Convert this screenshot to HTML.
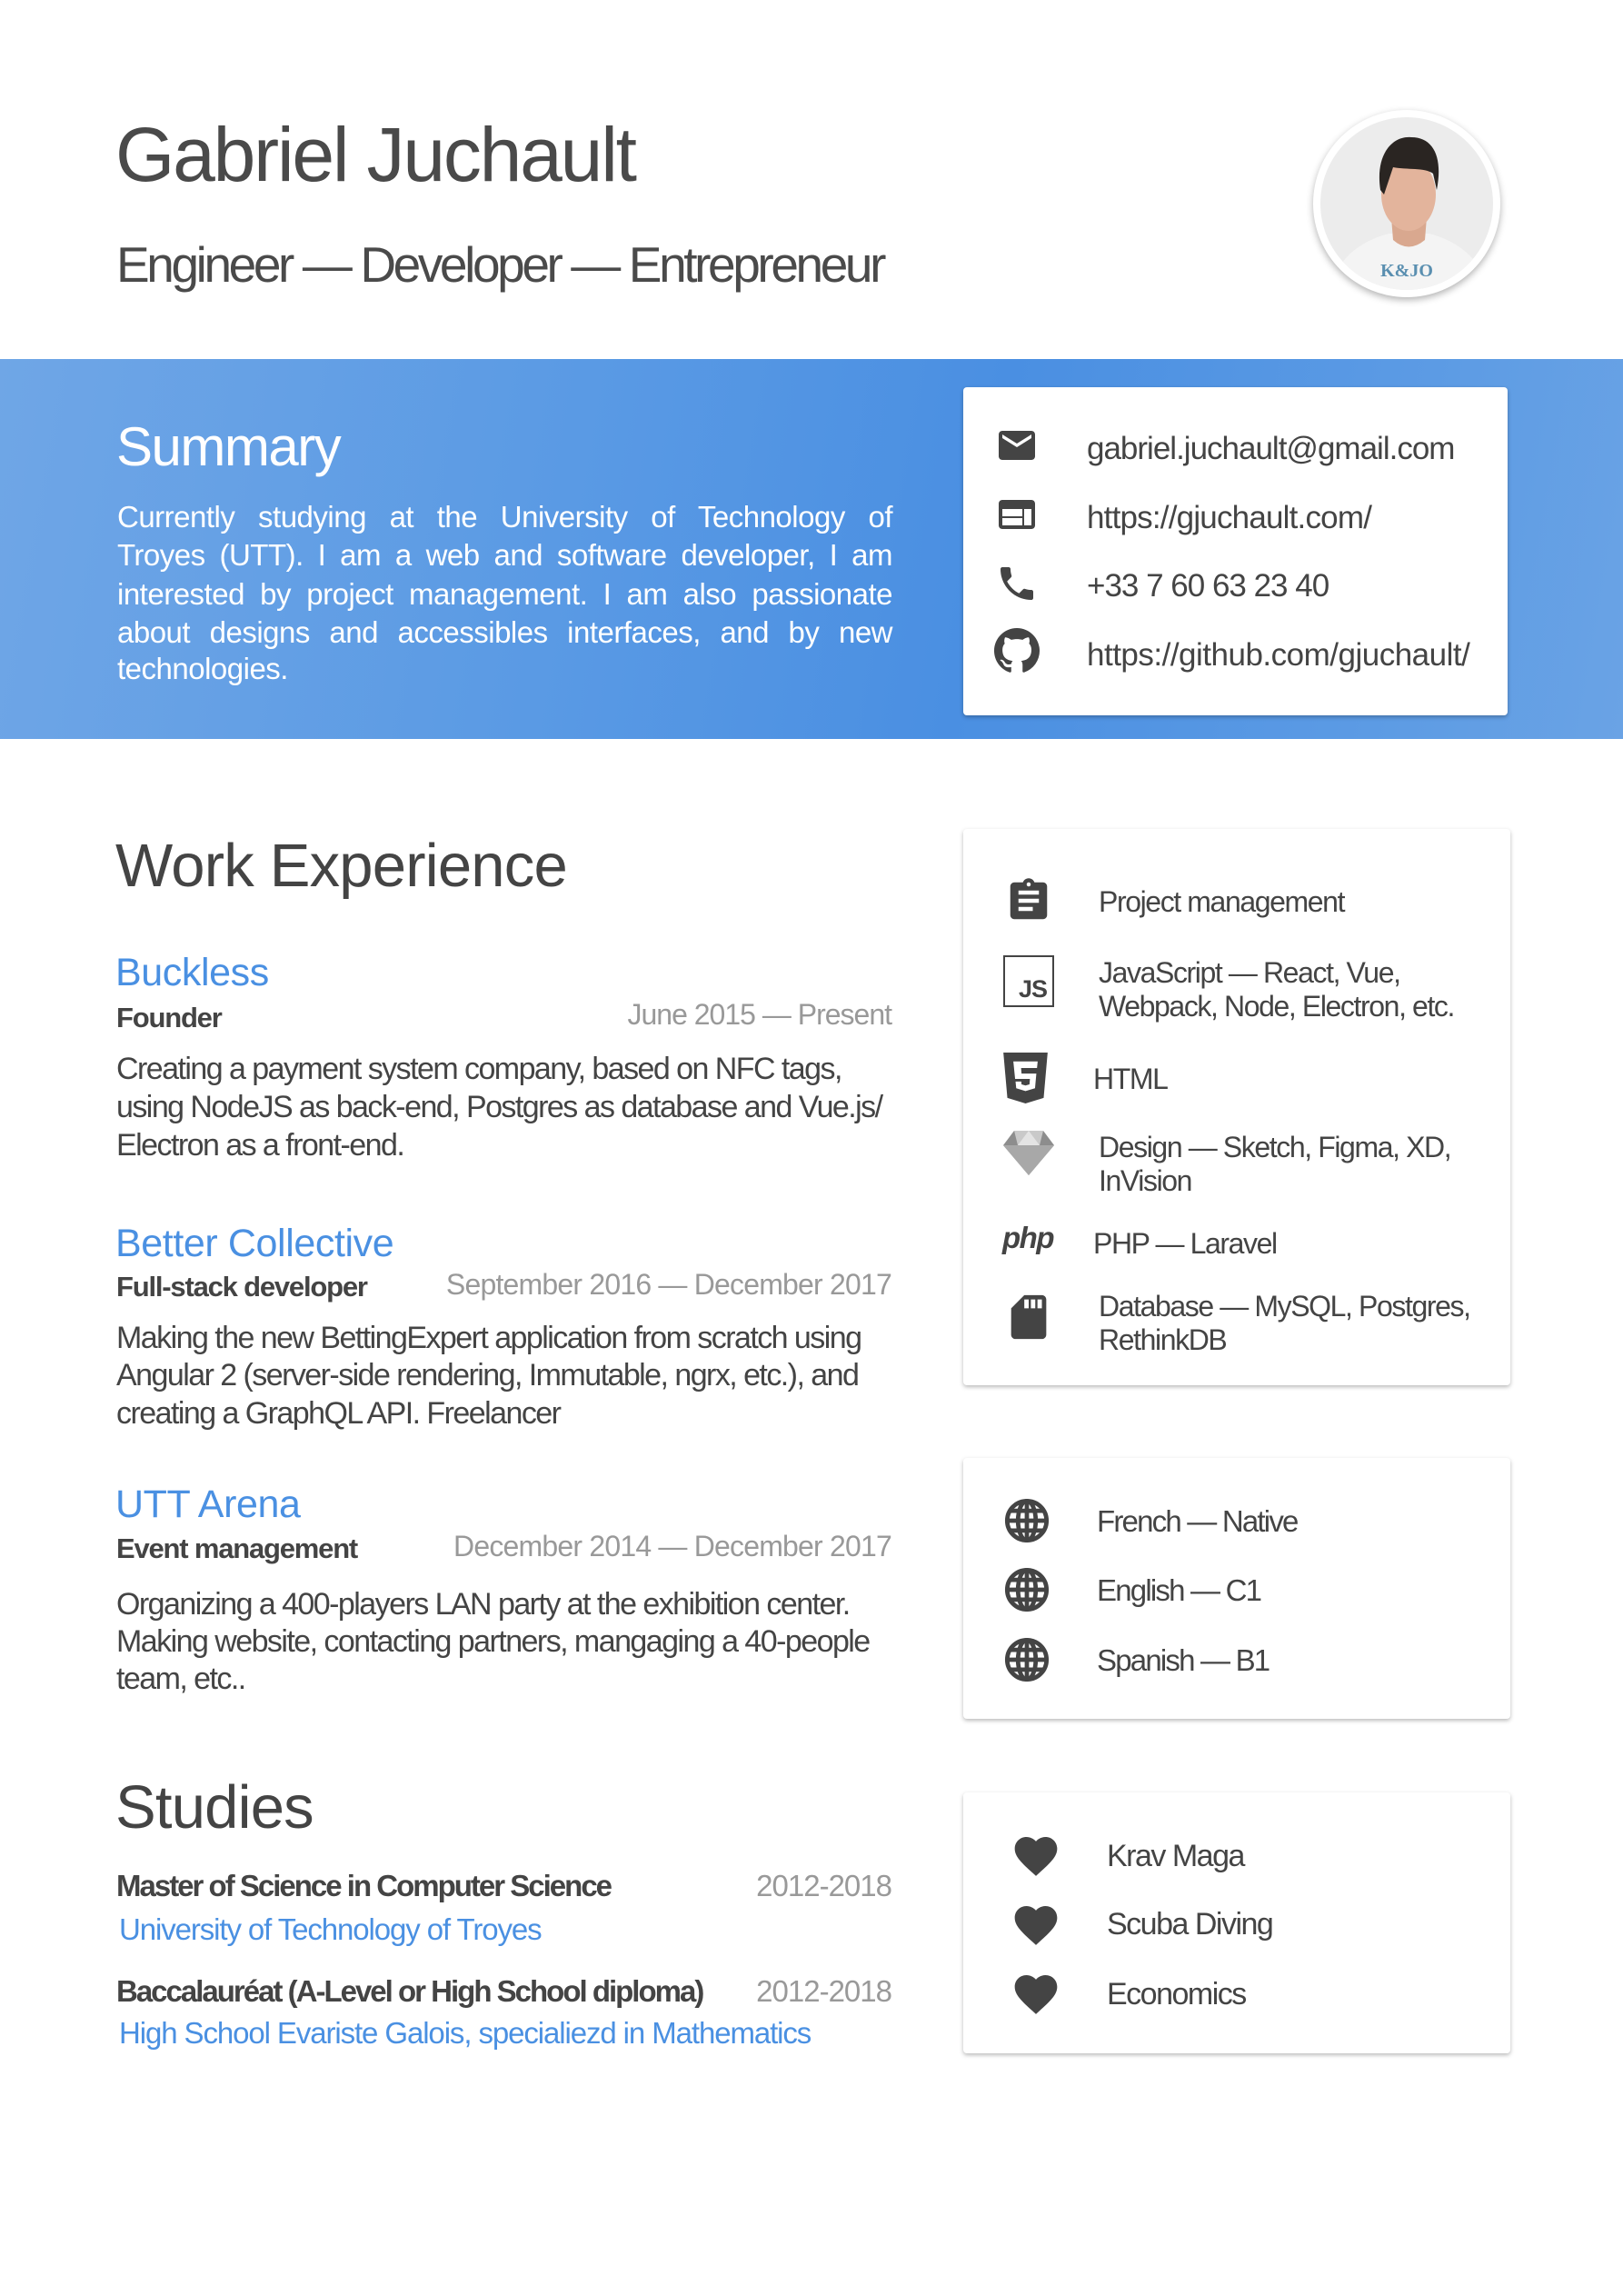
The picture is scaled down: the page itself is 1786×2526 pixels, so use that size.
<!DOCTYPE html>
<html><head><meta charset="utf-8">
<style>
*{margin:0;padding:0;box-sizing:border-box}
html,body{width:1786px;height:2526px;background:#fff;overflow:hidden}
body{position:relative;font-family:"Liberation Sans",Arial,sans-serif;color:#444}
.a{position:absolute;white-space:nowrap;line-height:1}
.band{position:absolute;left:0;top:395px;width:1786px;height:418px;background:linear-gradient(100deg,#6fa6e6 0%,#5a9ae4 35%,#4a8fe2 60%,#5c9be4 85%,#6aa3e5 100%)}
.card{position:absolute;background:#fff;border-radius:4px;box-shadow:0 2px 5px rgba(0,0,0,.28)}
.blue{color:#4a90e2}
.gray{color:#999}
.desc{font-size:34px;letter-spacing:-1.55px;color:#444}
.sum{position:absolute;left:129px;width:853px;font-size:33px;letter-spacing:-0.5px;color:#fff;text-align:justify;text-align-last:justify;white-space:nowrap;line-height:1}
.ic{position:absolute}
.sk{font-size:32px;color:#444;letter-spacing:-1.4px}
.role{font-size:31px;font-weight:bold;letter-spacing:-1.2px}
.co{font-size:43px;letter-spacing:-0.4px}
</style></head><body>

<div class="a" style="left:127px;top:128px;font-size:84px;letter-spacing:-2.2px;color:#4a4a4a">Gabriel Juchault</div>
<div class="a" style="left:128px;top:264px;font-size:55px;letter-spacing:-3.4px;color:#4a4a4a">Engineer — Developer — Entrepreneur</div>

<!-- photo -->
<div style="position:absolute;left:1445px;top:121px;width:206px;height:206px;border-radius:50%;background:#fff;box-shadow:0 3px 8px rgba(0,0,0,.3)"></div>
<svg style="position:absolute;left:1453px;top:129px" width="190" height="190" viewBox="0 0 190 190">
<defs><clipPath id="cp"><circle cx="95" cy="95" r="95"/></clipPath></defs>
<g clip-path="url(#cp)">
<rect width="190" height="190" fill="#ececec"/>
<path d="M10 190 C20 150 50 135 75 128 L120 128 C145 135 175 150 185 190Z" fill="#f4f4f4"/>
<path d="M78 110 L80 135 Q97 150 115 135 L117 110Z" fill="#d9a88f"/>
<ellipse cx="97" cy="85" rx="30" ry="40" fill="#e3b49c"/>
<path d="M66 80 C60 40 80 20 100 22 C125 22 135 45 128 80 L124 62 C115 55 95 58 80 55 L70 85Z" fill="#2a2522"/>
<text x="95" y="175" font-family="Liberation Serif,serif" font-weight="bold" font-size="20" fill="#5a8fb0" text-anchor="middle">K&amp;JO</text>
</g></svg>

<div class="band"></div>
<div class="a" style="left:128px;top:462px;font-size:60px;letter-spacing:-1.5px;color:#fff">Summary</div>
<div class="sum" style="top:552px">Currently studying at the University of Technology of</div>
<div class="sum" style="top:594px">Troyes (UTT). I am a web and software developer, I am</div>
<div class="sum" style="top:637px">interested by project management. I am also passionate</div>
<div class="sum" style="top:679px">about designs and accessibles interfaces, and by new</div>
<div class="sum" style="top:719px;text-align-last:left">technologies.</div>

<div class="card" style="left:1060px;top:426px;width:599px;height:361px"></div>
<svg class="ic" style="left:1095px;top:466px" width="48" height="48" viewBox="0 0 24 24"><path fill="#444" d="M20 4H4c-1.1 0-1.99.9-1.99 2L2 18c0 1.1.9 2 2 2h16c1.1 0 2-.9 2-2V6c0-1.1-.9-2-2-2zm0 4l-8 5-8-5V6l8 5 8-5v2z"/></svg>
<svg class="ic" style="left:1095px;top:542px" width="48" height="48" viewBox="0 0 24 24"><path fill="#444" d="M20 4H4c-1.1 0-1.99.9-1.99 2L2 18c0 1.1.9 2 2 2h16c1.1 0 2-.9 2-2V6c0-1.1-.9-2-2-2zm-5 14H4v-4h11v4zm0-5H4V9h11v4zm5 5h-4V9h4v9z"/></svg>
<svg class="ic" style="left:1095px;top:618px" width="48" height="48" viewBox="0 0 24 24"><path fill="#444" d="M6.62 10.79c1.44 2.83 3.76 5.14 6.59 6.59l2.2-2.2c.27-.27.67-.36 1.020-.24 1.12.37 2.33.57 3.57.57.55 0 1 .45 1 1V20c0 .55-.45 1-1 1-9.39 0-17-7.61-17-17 0-.55.45-1 1-1h3.5c.55 0 1 .45 1 1 0 1.25.2 2.45.57 3.57.11.35.03.74-.25 1.02l-2.2 2.2z"/></svg>
<svg class="ic" style="left:1094px;top:691px" width="50" height="50" viewBox="0 0 16 16"><path fill="#444" d="M8 0C3.58 0 0 3.58 0 8c0 3.54 2.29 6.53 5.47 7.59.4.07.55-.17.55-.38 0-.19-.01-.82-.01-1.49-2.01.37-2.53-.49-2.69-.94-.09-.23-.48-.94-.82-1.13-.28-.15-.68-.52-.01-.53.63-.01 1.08.58 1.23.82.72 1.21 1.87.87 2.33.66.07-.52.28-.87.51-1.07-1.78-.2-3.64-.89-3.64-3.95 0-.87.31-1.59.82-2.15-.08-.2-.36-1.02.08-2.12 0 0 .67-.21 2.2.82.64-.18 1.32-.27 2-.27.68 0 1.36.09 2 .27 1.53-1.04 2.2-.82 2.2-.82.44 1.1.16 1.92.08 2.12.51.56.82 1.27.82 2.15 0 3.07-1.87 3.75-3.65 3.95.29.25.54.73.54 1.48 0 1.07-.01 1.93-.01 2.2 0 .21.15.46.55.38A8.013 8.013 0 0016 8c0-4.42-3.58-8-8-8z"/></svg>
<div class="a" style="left:1196px;top:476px;font-size:35px;letter-spacing:-1px">gabriel.juchault@gmail.com</div>
<div class="a" style="left:1196px;top:552px;font-size:35px;letter-spacing:-0.8px">https://gjuchault.com/</div>
<div class="a" style="left:1196px;top:627px;font-size:35px;letter-spacing:-1px">+33 7 60 63 23 40</div>
<div class="a" style="left:1196px;top:703px;font-size:35px;letter-spacing:-0.5px">https://github.com/gjuchault/</div>

<!-- Work -->
<div class="a" style="left:127px;top:919px;font-size:67px;letter-spacing:-0.8px;color:#444">Work Experience</div>

<div class="a blue co" style="left:127px;top:1049px">Buckless</div>
<div class="a role" style="left:128px;top:1104px">Founder</div>
<div class="a gray" style="right:805px;top:1100px;font-size:32px;letter-spacing:-1px">June 2015 — Present</div>
<div class="a desc" style="left:128px;top:1159px">Creating a payment system company, based on NFC tags,</div>
<div class="a desc" style="left:128px;top:1201px">using NodeJS as back-end, Postgres as database and Vue.js/</div>
<div class="a desc" style="left:128px;top:1243px">Electron as a front-end.</div>

<div class="a blue co" style="left:127px;top:1347px">Better Collective</div>
<div class="a role" style="left:128px;top:1400px">Full-stack developer</div>
<div class="a gray" style="right:805px;top:1397px;font-size:32px;letter-spacing:-0.8px">September 2016 — December 2017</div>
<div class="a desc" style="left:128px;top:1455px">Making the new BettingExpert application from scratch using</div>
<div class="a desc" style="left:128px;top:1496px">Angular 2 (server-side rendering, Immutable, ngrx, etc.), and</div>
<div class="a desc" style="left:128px;top:1538px">creating a GraphQL API. Freelancer</div>

<div class="a blue co" style="left:127px;top:1634px">UTT Arena</div>
<div class="a role" style="left:128px;top:1688px">Event management</div>
<div class="a gray" style="right:805px;top:1685px;font-size:32px;letter-spacing:-0.8px">December 2014 — December 2017</div>
<div class="a desc" style="left:128px;top:1748px">Organizing a 400-players LAN party at the exhibition center.</div>
<div class="a desc" style="left:128px;top:1789px">Making website, contacting partners, mangaging a 40-people</div>
<div class="a desc" style="left:128px;top:1830px">team, etc..</div>

<div class="a" style="left:127px;top:1955px;font-size:67px;letter-spacing:-0.8px">Studies</div>
<div class="a" style="left:128px;top:2058px;font-size:33px;font-weight:bold;letter-spacing:-2px">Master of Science in Computer Science</div>
<div class="a gray" style="right:805px;top:2058px;font-size:33px;letter-spacing:-1px">2012-2018</div>
<div class="a blue" style="left:131px;top:2106px;font-size:33px;letter-spacing:-1.1px">University of Technology of Troyes</div>
<div class="a" style="left:128px;top:2174px;font-size:33px;font-weight:bold;letter-spacing:-2px">Baccalauréat (A-Level or High School diploma)</div>
<div class="a gray" style="right:805px;top:2174px;font-size:33px;letter-spacing:-1px">2012-2018</div>
<div class="a blue" style="left:131px;top:2220px;font-size:33px;letter-spacing:-1.1px">High School Evariste Galois, specialiezd in Mathematics</div>

<!-- Skills card -->
<div class="card" style="left:1060px;top:912px;width:602px;height:612px"></div>
<svg class="ic" style="left:1105px;top:964px" width="54" height="54" viewBox="0 0 24 24"><path fill="#444" d="M19 3h-4.18C14.4 1.84 13.3 1 12 1c-1.3 0-2.4.84-2.82 2H5c-1.1 0-2 .9-2 2v14c0 1.1.9 2 2 2h14c1.1 0 2-.9 2-2V5c0-1.1-.9-2-2-2zm-7 0c.55 0 1 .45 1 1s-.45 1-1 1-1-.45-1-1 .45-1 1-1zm2 14H7v-2h7v2zm3-4H7v-2h10v2zm0-4H7V7h10v2z"/></svg>
<div style="position:absolute;left:1104px;top:1051px;width:56px;height:57px;border:2px solid #444"></div>
<div class="a" style="left:1121px;top:1075px;font-size:27px;font-weight:bold;color:#444;letter-spacing:-1px">JS</div>
<svg class="ic" style="left:1104px;top:1158px" width="49" height="56" viewBox="0 0 20 23"><path fill="#444" d="M0 0H20L18.2 20.5 10 23 1.8 20.5Z"/><path fill="#fff" d="M4.5 4h11l-.3 3H8l.2 2.5h6.7l-.6 6.6L10 17.4l-4.2-1.3-.3-3h2.6l.1 1.3 1.8.5 1.8-.5.2-2.5H5.3z"/></svg>
<svg class="ic" style="left:1104px;top:1243px" width="56" height="50" viewBox="0 0 56 50"><path fill="#8d8d8d" d="M12 1H44L56 17 28 50 0 17Z"/><path fill="#c9c9c9" d="M12 1H44L40 17H16Z"/><path fill="#e3e3e3" d="M28 1 40 17H16Z"/><path fill="#a8a8a8" d="M0 17H56L28 50Z"/></svg>
<div class="a" style="left:1103px;top:1345px;font-size:33px;font-weight:bold;font-style:italic;color:#444;letter-spacing:-1.5px">php</div>
<svg class="ic" style="left:1103px;top:1420px" width="58" height="58" viewBox="0 0 24 24"><path fill="#444" d="M18 2h-8L4.02 8 4 20c0 1.1.9 2 2 2h12c1.1 0 2-.9 2-2V4c0-1.1-.9-2-2-2zm-6 6h-2V4h2v4zm3 0h-2V4h2v4zm3 0h-2V4h2v4z"/></svg>
<div class="a sk" style="left:1209px;top:976px">Project management</div>
<div class="a sk" style="left:1209px;top:1054px">JavaScript — React, Vue,</div>
<div class="a sk" style="left:1209px;top:1091px">Webpack, Node, Electron, etc.</div>
<div class="a sk" style="left:1203px;top:1171px">HTML</div>
<div class="a sk" style="left:1209px;top:1246px">Design — Sketch, Figma, XD,</div>
<div class="a sk" style="left:1209px;top:1283px">InVision</div>
<div class="a sk" style="left:1203px;top:1352px">PHP — Laravel</div>
<div class="a sk" style="left:1209px;top:1421px">Database — MySQL, Postgres,</div>
<div class="a sk" style="left:1209px;top:1458px">RethinkDB</div>

<!-- Languages -->
<div class="card" style="left:1060px;top:1604px;width:602px;height:287px"></div>
<svg class="ic" style="left:1104px;top:1647px" width="52" height="52" viewBox="0 0 24 24"><g fill="none" stroke="#444" stroke-width="2.2"><circle cx="12" cy="12" r="10"/><ellipse cx="12" cy="12" rx="4.5" ry="10"/><path d="M2 12H22M3.5 7H20.5M3.5 17H20.5M12 2V22"/></g></svg>
<svg class="ic" style="left:1104px;top:1723px" width="52" height="52" viewBox="0 0 24 24"><g fill="none" stroke="#444" stroke-width="2.2"><circle cx="12" cy="12" r="10"/><ellipse cx="12" cy="12" rx="4.5" ry="10"/><path d="M2 12H22M3.5 7H20.5M3.5 17H20.5M12 2V22"/></g></svg>
<svg class="ic" style="left:1104px;top:1800px" width="52" height="52" viewBox="0 0 24 24"><g fill="none" stroke="#444" stroke-width="2.2"><circle cx="12" cy="12" r="10"/><ellipse cx="12" cy="12" rx="4.5" ry="10"/><path d="M2 12H22M3.5 7H20.5M3.5 17H20.5M12 2V22"/></g></svg>
<div class="a sk" style="left:1207px;top:1657px;font-size:33px;letter-spacing:-1.8px">French — Native</div>
<div class="a sk" style="left:1207px;top:1733px;font-size:33px;letter-spacing:-1.8px">English — C1</div>
<div class="a sk" style="left:1207px;top:1810px;font-size:33px;letter-spacing:-1.8px">Spanish — B1</div>

<!-- Hobbies -->
<div class="card" style="left:1060px;top:1972px;width:602px;height:287px"></div>
<svg class="ic" style="left:1112px;top:2014px" width="56" height="56" viewBox="0 0 24 24"><path fill="#444" d="M12 21.35l-1.45-1.32C5.4 15.36 2 12.28 2 8.5 2 5.42 4.42 3 7.5 3c1.74 0 3.41.81 4.5 2.09C13.09 3.81 14.76 3 16.5 3 19.58 3 22 5.42 22 8.5c0 3.78-3.4 6.86-8.55 11.54L12 21.35z"/></svg>
<svg class="ic" style="left:1112px;top:2090px" width="56" height="56" viewBox="0 0 24 24"><path fill="#444" d="M12 21.35l-1.45-1.32C5.4 15.36 2 12.28 2 8.5 2 5.42 4.42 3 7.5 3c1.74 0 3.41.81 4.5 2.09C13.09 3.81 14.76 3 16.5 3 19.58 3 22 5.42 22 8.5c0 3.78-3.4 6.86-8.55 11.54L12 21.35z"/></svg>
<svg class="ic" style="left:1112px;top:2166px" width="56" height="56" viewBox="0 0 24 24"><path fill="#444" d="M12 21.35l-1.45-1.32C5.4 15.36 2 12.28 2 8.5 2 5.42 4.42 3 7.5 3c1.74 0 3.41.81 4.5 2.09C13.09 3.81 14.76 3 16.5 3 19.58 3 22 5.42 22 8.5c0 3.78-3.4 6.86-8.55 11.54L12 21.35z"/></svg>
<div class="a" style="left:1218px;top:2025px;font-size:34px;letter-spacing:-1.5px">Krav Maga</div>
<div class="a" style="left:1218px;top:2100px;font-size:34px;letter-spacing:-1.5px">Scuba Diving</div>
<div class="a" style="left:1218px;top:2177px;font-size:34px;letter-spacing:-1.5px">Economics</div>

</body></html>
